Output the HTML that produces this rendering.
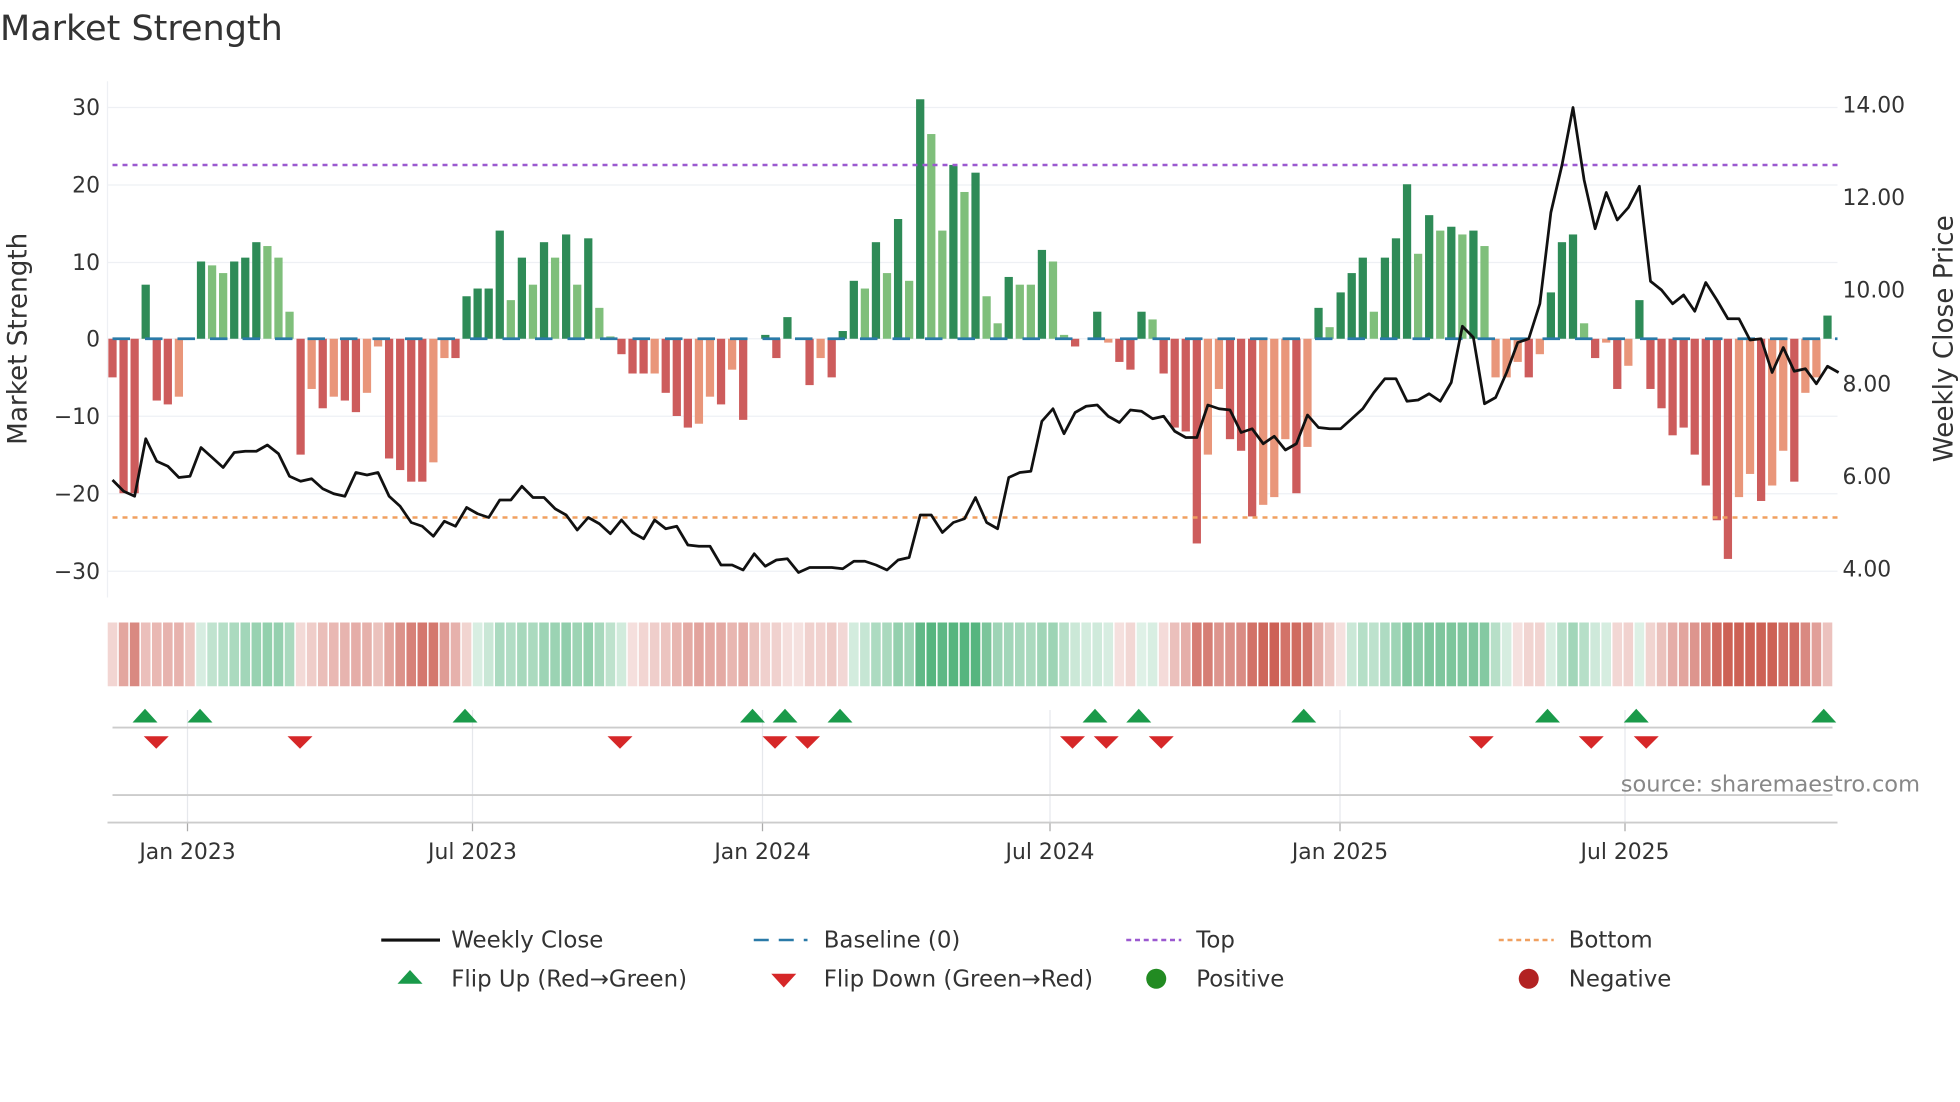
<!DOCTYPE html>
<html><head><meta charset="utf-8"><style>
html,body{margin:0;padding:0;background:#fff;width:1960px;height:1102px;overflow:hidden}
svg{display:block}
text{font-family:"DejaVu Sans","Liberation Sans",sans-serif;fill:#333}
</style></head><body>
<svg id="s" width="1960" height="1102" viewBox="0 0 1568 881.6" xmlns="http://www.w3.org/2000/svg">
<text x="0" y="32" font-size="28">Market Strength</text>
<g id="grid"></g>
<g id="strip"></g>
<g id="bars"></g>
<line x1="90" y1="132" x2="1470" y2="132" stroke="#9b59d0" stroke-width="2" stroke-dasharray="4,4"/>
<line x1="90" y1="414" x2="1470" y2="414" stroke="#f0a060" stroke-width="2" stroke-dasharray="4,4"/>
<line x1="90" y1="271" x2="1470" y2="271" stroke="#2a7aa8" stroke-width="2.2" stroke-dasharray="14,12"/>
<polyline id="price" fill="none" stroke="#111" stroke-width="2.2" stroke-linejoin="round"/>
<g id="marks"></g>
<g font-size="17.5">
<text x="80" y="92" text-anchor="end">30</text>
<text x="80" y="154" text-anchor="end">20</text>
<text x="80" y="216" text-anchor="end">10</text>
<text x="80" y="277" text-anchor="end">0</text>
<text x="80" y="339" text-anchor="end">−10</text>
<text x="80" y="401" text-anchor="end">−20</text>
<text x="80" y="463" text-anchor="end">−30</text>
<text x="1474" y="90">14.00</text>
<text x="1474" y="164">12.00</text>
<text x="1474" y="238">10.00</text>
<text x="1474" y="313">8.00</text>
<text x="1474" y="387">6.00</text>
<text x="1474" y="461">4.00</text>
<text x="150" y="687" text-anchor="middle">Jan 2023</text>
<text x="378" y="687" text-anchor="middle">Jul 2023</text>
<text x="610" y="687" text-anchor="middle">Jan 2024</text>
<text x="840" y="687" text-anchor="middle">Jul 2024</text>
<text x="1072" y="687" text-anchor="middle">Jan 2025</text>
<text x="1300" y="687" text-anchor="middle">Jul 2025</text>
</g>
<text font-size="21" transform="translate(21,271) rotate(-90)" text-anchor="middle">Market Strength</text>
<text font-size="21" transform="translate(1562,271) rotate(-90)" text-anchor="middle">Weekly Close Price</text>
<text x="1536" y="633" font-size="18" text-anchor="end" style="fill:#888">source: sharemaestro.com</text>
<g font-size="18.3">
<line x1="305" y1="752" x2="352" y2="752" stroke="#111" stroke-width="2.5"/>
<text x="361" y="758">Weekly Close</text>
<line x1="603" y1="752" x2="646" y2="752" stroke="#2a7aa8" stroke-width="2" stroke-dasharray="12,8"/>
<text x="659" y="758">Baseline (0)</text>
<line x1="901" y1="752" x2="945" y2="752" stroke="#9b59d0" stroke-width="2" stroke-dasharray="4,3"/>
<text x="957" y="758">Top</text>
<line x1="1199" y1="752" x2="1243" y2="752" stroke="#f0a060" stroke-width="2" stroke-dasharray="4,3"/>
<text x="1255" y="758">Bottom</text>
<polygon points="318,787 338,787 328,776" fill="#1a9a4a"/>
<text x="361" y="789">Flip Up (Red→Green)</text>
<polygon points="617,779 637,779 627,790" fill="#d62728"/>
<text x="659" y="789">Flip Down (Green→Red)</text>
<circle cx="925" cy="783" r="8" fill="#228b22"/>
<text x="957" y="789">Positive</text>
<circle cx="1223" cy="783" r="8" fill="#b22222"/>
<text x="1255" y="789">Negative</text>
</g>
</svg>
<script>
var NS="http://www.w3.org/2000/svg";
function el(p,t,a){var e=document.createElementNS(NS,t);for(var k in a)e.setAttribute(k,a[k]);p.appendChild(e);return e;}
var V=[[-5,'r'],[-20,'r'],[-20,'r'],[7,'g'],[-8,'r'],[-8.5,'r'],[-7.5,'o'],[0,'o'],[10,'g'],[9.5,'l'],[8.5,'l'],[10,'g'],[10.5,'g'],[12.5,'g'],[12,'l'],[10.5,'l'],[3.5,'l'],[-15,'r'],[-6.5,'o'],[-9,'r'],[-7.5,'o'],[-8,'r'],[-9.5,'r'],[-7,'o'],[-1,'o'],[-15.5,'r'],[-17,'r'],[-18.5,'r'],[-18.5,'r'],[-16,'o'],[-2.5,'o'],[-2.5,'r'],[5.5,'g'],[6.5,'g'],[6.5,'g'],[14,'g'],[5,'l'],[10.5,'g'],[7,'l'],[12.5,'g'],[10.5,'l'],[13.5,'g'],[7,'l'],[13,'g'],[4,'l'],[0.3,'l'],[-2,'r'],[-4.5,'r'],[-4.5,'r'],[-4.5,'o'],[-7,'r'],[-10,'r'],[-11.5,'r'],[-11,'o'],[-7.5,'o'],[-8.5,'r'],[-4,'o'],[-10.5,'r'],[0,'o'],[0.5,'g'],[-2.5,'r'],[2.8,'g'],[0,'o'],[-6,'r'],[-2.5,'o'],[-5,'r'],[1,'g'],[7.5,'g'],[6.5,'l'],[12.5,'g'],[8.5,'l'],[15.5,'g'],[7.5,'l'],[31,'g'],[26.5,'l'],[14,'l'],[22.5,'g'],[19,'l'],[21.5,'g'],[5.5,'l'],[2,'l'],[8,'g'],[7,'l'],[7,'l'],[11.5,'g'],[10,'l'],[0.5,'l'],[-1,'r'],[0,'o'],[3.5,'g'],[-0.5,'o'],[-3,'r'],[-4,'r'],[3.5,'g'],[2.5,'l'],[-4.5,'r'],[-11.5,'r'],[-12,'r'],[-26.5,'r'],[-15,'o'],[-6.5,'o'],[-13,'r'],[-14.5,'r'],[-23,'r'],[-21.5,'o'],[-20.5,'o'],[-13,'o'],[-20,'r'],[-14,'o'],[4,'g'],[1.5,'l'],[6,'g'],[8.5,'g'],[10.5,'g'],[3.5,'l'],[10.5,'g'],[13,'g'],[20,'g'],[11,'l'],[16,'g'],[14,'l'],[14.5,'g'],[13.5,'l'],[14,'g'],[12,'l'],[-5,'o'],[-5,'o'],[-3,'o'],[-5,'r'],[-2,'o'],[6,'g'],[12.5,'g'],[13.5,'g'],[2,'l'],[-2.5,'r'],[-0.5,'o'],[-6.5,'r'],[-3.5,'o'],[5,'g'],[-6.5,'r'],[-9,'r'],[-12.5,'r'],[-11.5,'r'],[-15,'r'],[-19,'r'],[-23.5,'r'],[-28.5,'r'],[-20.5,'o'],[-17.5,'o'],[-21,'r'],[-19,'o'],[-14.5,'o'],[-18.5,'r'],[-7,'o'],[-5,'o'],[3,'g']];
var P=[384,393,397,351,369,373,382,381,358,366,374,362,361,361,356,363,381,385,383,391,395,397,378,380,378,397,405,418,421,429,417,421,406,411,414,400,400,389,398,398,407,412,424,414,419,427,416,426,431,416,423,421,436,437,437,452,452,456,443,453,448,447,458,454,454,454,455,449,449,452,456,448,446,412,412,426,418,415,398,418,423,382,378,377,337,327,347,330,325,324,333,338,328,329,335,333,345,350,350,324,327,328,346,343,355,349,360,355,332,342,343,343,335,327,314,303,303,321,320,315,321,306,261,270,323,318,298,274,271,243,170,132,86,144,183,154,176,166,149,225,232,243,236,249,226,240,255,255,272,271,298,278,297,295,307,293,298];
var X0=90,W=(1462-90)/(V.length-1);
var C={g:'#2e8b57',l:'#7fbf7b',r:'#cd5c5c',o:'#e9967a'};
var g=document.getElementById('grid');
[86,148,210,271,333,395,457].forEach(function(y){el(g,'line',{x1:86,x2:1470,y1:y,y2:y,stroke:'#eef0f4','stroke-width':1});});
el(g,'line',{x1:86,x2:86,y1:65,y2:478,stroke:'#eef0f4','stroke-width':1});
[150,378,610,840,1072,1300].forEach(function(x){el(g,'line',{x1:x,x2:x,y1:568,y2:658,stroke:'#e6e8ec','stroke-width':1});el(g,'line',{x1:x,x2:x,y1:658,y2:665,stroke:'#aaa','stroke-width':1});});
el(g,'line',{x1:90,x2:1466,y1:582,y2:582,stroke:'#ccc','stroke-width':1.5});
el(g,'line',{x1:90,x2:1466,y1:636,y2:636,stroke:'#ccc','stroke-width':1.5});
el(g,'line',{x1:86,x2:1470,y1:658,y2:658,stroke:'#ccc','stroke-width':1.5});
var b=document.getElementById('bars'),s=document.getElementById('strip');
var ema=0;
V.forEach(function(d,i){var v=d[0];var x=X0+i*W;var y0=271,y1=271-6.18*v;
 if(Math.abs(v)>0.05)el(b,'rect',{x:x-3.3,width:6.6,y:Math.min(y0,y1),height:Math.abs(y1-y0),fill:C[d[1]]});
 ema=ema*0.6+v*0.4;var a=Math.min(1,0.18+Math.abs(ema)/24);
 el(s,'rect',{x:x-W/2+0.6,width:W-1.2,y:498,height:51,fill:ema>=0?'#2ca25f':'#c0392b','fill-opacity':a*0.8});
});
var pts=P.map(function(y,i){return (X0+i*W).toFixed(1)+','+y;}).join(' ');
document.getElementById('price').setAttribute('points',pts);
var m=document.getElementById('marks');
[116,160,372,602,628,672,876,911,1043,1238,1309,1459].forEach(function(x){el(m,'polygon',{points:(x-10)+',578 '+(x+10)+',578 '+x+',567',fill:'#1a9a4a'});});
[125,240,496,620,646,858,885,929,1185,1273,1317].forEach(function(x){el(m,'polygon',{points:(x-10)+',589 '+(x+10)+',589 '+x+',599',fill:'#d62728'});});
</script>
</body></html>
